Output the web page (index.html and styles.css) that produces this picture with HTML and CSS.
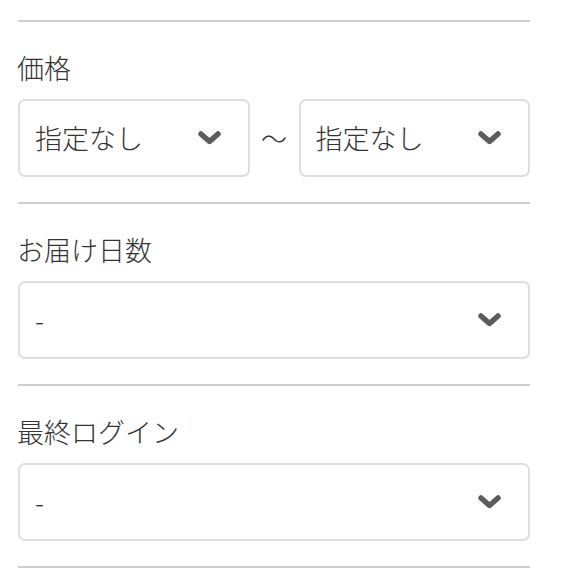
FILE: index.html
```html
<!DOCTYPE html>
<html lang="ja">
<head>
<meta charset="utf-8">
<link rel="stylesheet" href="styles.css">
</head>
<body>
<div class="filters">
  <section class="field">
    <div class="label">価格</div>
    <div class="range">
      <div class="select"><span class="value">指定なし</span><svg class="chev" viewBox="0 0 23 14" width="23" height="14"><polyline points="3,3 11.5,10.5 20,3"/></svg></div>
      <div class="tilde">〜</div>
      <div class="select"><span class="value">指定なし</span><svg class="chev" viewBox="0 0 23 14" width="23" height="14"><polyline points="3,3 11.5,10.5 20,3"/></svg></div>
    </div>
  </section>
  <section class="field">
    <div class="label">お届け日数</div>
    <div class="select"><span class="value">-</span><svg class="chev" viewBox="0 0 23 14" width="23" height="14"><polyline points="3,3 11.5,10.5 20,3"/></svg></div>
  </section>
  <section class="field">
    <div class="label">最終ログイン</div>
    <div class="select"><span class="value">-</span><svg class="chev" viewBox="0 0 23 14" width="23" height="14"><polyline points="3,3 11.5,10.5 20,3"/></svg></div>
  </section>
  <div class="end"></div>
</div>
</body>
</html>
```
FILE: styles.css
```css
html, body {
  margin: 0;
  padding: 0;
  background: #fff;
}
body {
  font-family: "Noto Sans CJK JP", "Noto Sans", sans-serif;
  font-weight: 300;
  color: #333;
}
.filters {
  width: 512px;
  margin-left: 18px;
  padding-top: 20px;
}
.field {
  border-top: 2px solid #cfcfcf;
  padding: 28px 0 25px;
}
.label {
  font-size: 27px;
  line-height: 36px;
  height: 36px;
  margin-bottom: 13px;
  margin-left: -1px;
  color: #333;
}
.range {
  display: flex;
  align-items: center;
}
.range .select {
  flex: 1;
}
.tilde {
  width: 49px;
  text-align: center;
  font-size: 26px;
  line-height: 36px;
  color: #333;
}
.select {
  box-sizing: border-box;
  height: 78px;
  border: 2px solid #dedede;
  border-radius: 7px;
  display: flex;
  align-items: center;
  padding-left: 15px;
  padding-right: 27px;
}
.value {
  flex: 1;
  font-size: 27px;
  line-height: 36px;
  color: #333;
}
.chev {
  display: block;
}
.chev polyline {
  fill: none;
  stroke: #5c5c5c;
  stroke-width: 5.5;
  stroke-linecap: round;
  stroke-linejoin: round;
}
.end {
  border-top: 2px solid #cfcfcf;
}
```
